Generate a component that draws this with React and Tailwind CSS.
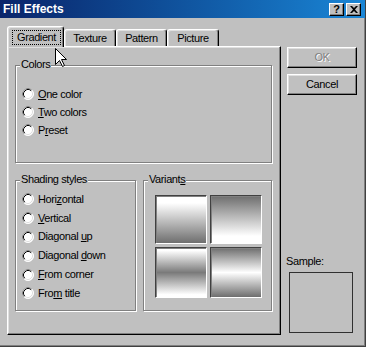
import React from "react";

const Radio = () => (
  <svg width="12" height="12" viewBox="0 0 12 12" className="shrink-0">
    <circle cx="6" cy="6" r="5.5" fill="#fff" stroke="#fff" />
    <path d="M9.89 2.11A5.5 5.5 0 0 0 2.11 9.89" fill="none" stroke="#808080" />
    <path d="M9.18 2.82A4.5 4.5 0 0 0 2.82 9.18" fill="none" stroke="#000" />
    <path d="M9.18 2.82A4.5 4.5 0 0 1 2.82 9.18" fill="none" stroke="#dfdfdf" />
  </svg>
);

const Option = ({ children, h = "h-[18px]" }) => (
  <div className={`flex items-center gap-[4px] pl-[6px] ${h}`}>
    <Radio />
    <span className="leading-[13px]">{children}</span>
  </div>
);

const Group = ({ title, className, children }) => (
  <div className={`relative border border-[#808080] shadow-[inset_1px_1px_0_#fff,1px_1px_0_#fff] ${className}`}>
    <span className="absolute -top-[8px] left-[4px] bg-[#c0c0c0] px-[1px] leading-[13px]">{title}</span>
    {children}
  </div>
);

const Button = ({ children, disabled }) => (
  <div className="h-[21px] flex items-center justify-center border border-t-white border-l-white border-r-black border-b-black shadow-[inset_-1px_-1px_0_#808080,inset_1px_1px_0_#dfdfdf]">
    <span className={disabled ? "text-[#808080] [text-shadow:1px_1px_0_#fff]" : ""}>{children}</span>
  </div>
);

const Tab = ({ children, w }) => (
  <div className={`${w} h-[17px] flex items-center justify-center rounded-t-[3px] border-l border-t border-white border-r border-r-black shadow-[inset_-1px_0_0_#808080,inset_1px_1px_0_#dfdfdf]`}>
    {children}
  </div>
);

const Swatch = ({ bg }) => (
  <div className={`border-t border-l border-[#404040] border-b border-r border-b-white border-r-white shadow-[inset_1px_1px_0_#808080] ${bg}`} />
);

export default function App() {
  return (
    <div className="relative w-[366px] h-[347px] bg-[#c0c0c0] border-r border-b border-[#404040] shadow-[inset_-1px_-1px_0_#808080] font-['Liberation_Sans',Arial,sans-serif] text-[11px] tracking-[-0.4px] text-black overflow-hidden">
      {/* title bar */}
      <div className="h-[18px] flex items-center justify-between bg-gradient-to-r from-[#0a246a] to-[#1a86d6] pl-[3px] pr-[4px]">
        <span className="text-white font-bold text-[12px] leading-[14px] tracking-normal">Fill Effects</span>
        <div className="flex gap-[2px]">
          <div className="w-[15px] h-[13px] flex items-center justify-center bg-[#c0c0c0] border border-t-white border-l-white border-r-black border-b-black shadow-[inset_-1px_-1px_0_#808080]">
            <span className="font-bold text-[11px] leading-[10px] tracking-normal">?</span>
          </div>
          <div className="w-[15px] h-[13px] flex items-center justify-center bg-[#c0c0c0] border border-t-white border-l-white border-r-black border-b-black shadow-[inset_-1px_-1px_0_#808080]">
            <svg width="8" height="7" viewBox="0 0 8 7">
              <path d="M0 0h2l2 2 2-2h2L5 3.5 8 7H6L4 5 2 7H0l3-3.5z" fill="#000" />
            </svg>
          </div>
        </div>
      </div>

      <div className="flex pl-[7px] pt-[8px]">
        {/* left: tabs + panel */}
        <div className="w-[274px] flex flex-col">
          <div className="h-[20px] flex items-end">
            <div className="relative z-10 w-[57px] h-[21px] -mb-[1px] bg-[#c0c0c0] flex items-center pl-[4px] rounded-t-[3px] border-l border-t border-white border-r border-r-black shadow-[inset_-1px_0_0_#808080,inset_1px_1px_0_#dfdfdf]">
              <span className="border border-dotted border-black px-[4px] leading-[13px]">Gradient</span>
            </div>
            <Tab w="w-[52px]">Texture</Tab>
            <Tab w="w-[51px]">Pattern</Tab>
            <Tab w="w-[52px]">Picture</Tab>
          </div>

          <div className="h-[289px] border-l border-t border-white border-r border-b border-r-black border-b-black shadow-[inset_-1px_-1px_0_#808080,inset_1px_1px_0_#dfdfdf] pl-[7px] pt-[18px]">
            <Group title="Colors" className="w-[257px] h-[98px] pt-[19px]">
              <Option><u>O</u>ne color</Option>
              <Option><u>T</u>wo colors</Option>
              <Option>P<u>r</u>eset</Option>
            </Group>

            <div className="flex gap-[7px] mt-[17px]">
              <Group title="Shading styles" className="w-[121px] h-[131px] pt-[9px]">
                <Option h="h-[18.8px]">Hori<u>z</u>ontal</Option>
                <Option h="h-[18.8px]"><u>V</u>ertical</Option>
                <Option h="h-[18.8px]">Diagonal <u>u</u>p</Option>
                <Option h="h-[18.8px]">Diagonal <u>d</u>own</Option>
                <Option h="h-[18.8px]"><u>F</u>rom corner</Option>
                <Option h="h-[18.8px]">Fro<u>m</u> title</Option>
              </Group>
              <Group title={<>Variant<u>s</u></>} className="w-[129px] h-[131px] pl-[11px] pt-[14px]">
                <div className="grid grid-cols-[52px_52px] grid-rows-[49px_51px] gap-[3px]">
                  <Swatch bg="bg-[linear-gradient(to_bottom,#fff_15%,#6e6e6e)]" />
                  <Swatch bg="bg-[linear-gradient(to_bottom,#6e6e6e,#fff_85%)]" />
                  <Swatch bg="bg-[linear-gradient(to_bottom,#fff_5%,#7a7a7a_50%,#fff_95%)]" />
                  <Swatch bg="bg-[linear-gradient(to_bottom,#6e6e6e,#fff_50%,#6e6e6e)]" />
                </div>
              </Group>
            </div>
          </div>
        </div>

        {/* right: buttons + sample */}
        <div className="w-[70px] ml-[6px] pt-[21px] pb-[2px] flex flex-col">
          <Button disabled>OK</Button>
          <div className="mt-[6px]">
            <Button>Cancel</Button>
          </div>
          <div className="mt-auto">
            <div className="-ml-[1px] leading-[13px] mb-[4px]">Sample:</div>
            <div className="ml-[2px] w-[64px] h-[61px] border border-[#303030]" />
          </div>
        </div>
      </div>

      {/* mouse pointer */}
      <svg className="absolute left-[55px] top-[48px]" width="13" height="20" viewBox="0 0 13 20">
        <path d="M0.5 0.5V16.5L4.5 12.5L7.5 18.5L9.5 17.5L6.5 11.5H11.5Z" fill="#fff" stroke="#000" />
      </svg>
    </div>
  );
}
